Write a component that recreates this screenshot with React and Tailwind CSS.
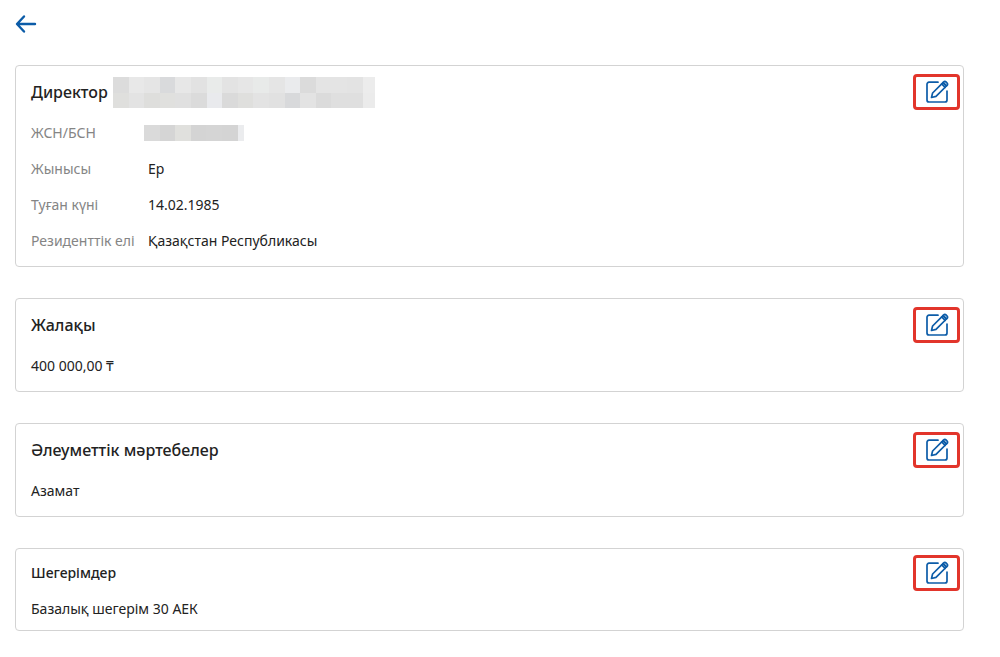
import React from 'react';

const nameCells = [
    ['#dcdcdc', '#e8e8e8', '#e5e5e5', '#d9dadc', '#e7e7e7', '#e2e2e2', '#e9ebea', '#e3e3e3', '#e6e6e6', '#e8eae9', '#e5e5e5', '#eaebed', '#dbdbdb', '#e4e4e4', '#e4e4e4', '#e3e3e3', '#ececec'],
    ['#dfdfdd', '#e3e3e3', '#dededc', '#e0e0de', '#e0e0e0', '#dbdbdb', '#e9eaed', '#dadada', '#dfdfdd', '#e3e3e3', '#e1e1e1', '#d8d9db', '#e3e3e3', '#dbdbdb', '#dfdfdf', '#dfdfdf', '#ebebeb']
];

const idCells = [['#dadada', '#d5d5d5', '#e0e0dd', '#d4d4d4', '#d5d5d5', '#d4d4d4', '#ebecee']];

// Pixelated cover for personal data
const Mosaic = ({ rows, width, height, className }) => (
    <svg
        className={className}
        width={width}
        height={height}
        shapeRendering="crispEdges"
        aria-hidden="true"
    >
        {rows.map((row, y) =>
            row.map((fill, x) => (
                <rect key={`${x}-${y}`} x={x * 15.6} y={y * 15.6} width="16" height="16" fill={fill} />
            ))
        )}
    </svg>
);

const EditButton = ({ label }) => (
    <button
        type="button"
        aria-label={label}
        className="flex h-9 w-[47px] shrink-0 items-center justify-center rounded border-3 border-[#e2352b] text-[#0c5ca8]"
    >
        <svg
            width="24"
            height="24"
            viewBox="0 0 24 24"
            fill="none"
            stroke="currentColor"
            strokeWidth="1.7"
            strokeLinecap="round"
            strokeLinejoin="round"
        >
            <path d="M13 2.200H4A2 2 0 0 0 2 4.200V20A2 2 0 0 0 4 22H20A2 2 0 0 0 22 20V11" />
            <path d="M6.500 17.500L7.600 13L18 2.600L21.400 6L11 16.400Z" />
            <path d="M16.700 3.900L20.100 7.300" />
            <path d="M18 2.600L18.700 1.900A1.600 1.600 0 0 1 21 1.900L22.100 3A1.600 1.600 0 0 1 22.100 5.300L21.400 6Z" fill="currentColor" fillOpacity="0.3" />
        </svg>
    </button>
);

const Card = ({ title, extra, compact, children }) => (
    <section
        className={`rounded border border-[#d3d3d3] pr-[3px] pl-[15px] ${compact ? 'pt-[6px] pb-[11px]' : 'pt-2 pb-[15px]'}`}
    >
        <div className="flex h-9 items-center justify-between">
            <div className="flex items-center gap-[5px]">
                <h2 className={`font-medium ${compact ? 'text-sm' : 'text-base'}`}>{title}</h2>
                {extra}
            </div>
            <EditButton label={title} />
        </div>
        <div className={compact ? 'mt-2' : 'mt-[13px]'}>{children}</div>
    </section>
);

const details = [
    { label: 'Жынысы', value: 'Ер' },
    { label: 'Туған күні', value: '14.02.1985' },
    { label: 'Резиденттік елі', value: 'Қазақстан Республикасы' }
];

const App = () => (
    <main className="bg-white pt-[11px] pr-9 pb-[26px] pl-[15px] font-['Noto_Sans','Open_Sans',sans-serif] text-sm text-[#222]">
        <button type="button" aria-label="Артқа" className="mb-[30px] flex h-6 w-6 items-center text-[#0c5ca8]">
            <svg
                width="22"
                height="24"
                viewBox="0 0 22 24"
                fill="none"
                stroke="currentColor"
                strokeWidth="2.4"
                strokeLinecap="round"
                strokeLinejoin="round"
            >
                <path d="M20 13H2.500M9 5.500L2 13L9 20.500" />
            </svg>
        </button>

        <div className="flex flex-col gap-[31px]">
            <Card
                title="Директор"
                extra={<Mosaic rows={nameCells} width={262} height={31} />}
            >
                <dl className="grid grid-cols-[104px_1fr] gap-x-[13px] gap-y-4">
                    <dt className="whitespace-nowrap text-[#858585]">ЖСН/БСН</dt>
                    <dd className="flex items-center">
                        <Mosaic rows={idCells} width={100} height={16} className="-ml-1" />
                    </dd>
                    {details.map(({ label, value }) => (
                        <React.Fragment key={label}>
                            <dt className="whitespace-nowrap text-[#858585]">{label}</dt>
                            <dd>{value}</dd>
                        </React.Fragment>
                    ))}
                </dl>
            </Card>

            <Card title="Жалақы">
                <p>400 000,00 ₸</p>
            </Card>

            <Card title="Әлеуметтік мәртебелер">
                <p>Азамат</p>
            </Card>

            <Card title="Шегерімдер" compact>
                <p>Базалық шегерім 30 АЕК</p>
            </Card>
        </div>
    </main>
);

export default App;
